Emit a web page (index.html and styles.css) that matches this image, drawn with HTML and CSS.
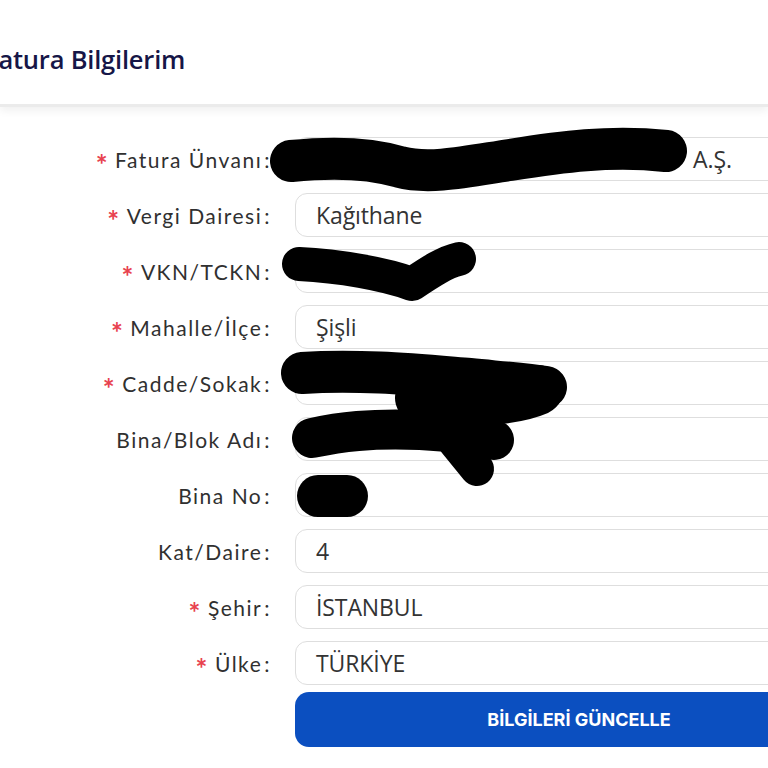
FILE: index.html
```html
<!DOCTYPE html>
<html lang="tr">
<head>
<meta charset="utf-8">
<title>Fatura Bilgilerim</title>
<link rel="stylesheet" href="styles.css">
</head>
<body>
<div class="page">
  <header class="header">
    <h1 class="title">Fatura Bilgilerim</h1>
  </header>
  <form class="form">
    <label class="label req">Fatura Ünvanı</label>
    <div class="field field-end">A.Ş.</div>

    <label class="label req">Vergi Dairesi</label>
    <div class="field">Kağıthane</div>

    <label class="label req">VKN/TCKN</label>
    <div class="field"></div>

    <label class="label req">Mahalle/İlçe</label>
    <div class="field">Şişli</div>

    <label class="label req">Cadde/Sokak</label>
    <div class="field"></div>

    <label class="label">Bina/Blok Adı</label>
    <div class="field"></div>

    <label class="label">Bina No</label>
    <div class="field"></div>

    <label class="label">Kat/Daire</label>
    <div class="field">4</div>

    <label class="label req">Şehir</label>
    <div class="field">İSTANBUL</div>

    <label class="label req">Ülke</label>
    <div class="field">TÜRKİYE</div>

    <button type="button" class="submit">BİLGİLERİ GÜNCELLE</button>
  </form>
  <svg class="redact" width="768" height="768" viewBox="0 0 768 768" aria-hidden="true">
    <g fill="none" stroke="#000" stroke-linecap="round" stroke-linejoin="round">
      <path stroke-width="42" d="M291,161 C330,157 370,158 400,167 C430,175 470,166 510,160 C560,152 610,145 666,151"/>
      <path stroke-width="34" d="M299,264 C340,266 385,274 412,284 C430,272 445,262 459,259"/>
      <path stroke-width="42" d="M302,373 C360,369 420,375 470,379 C500,382 525,384 546,387"/>
      <path stroke-width="50" d="M420,398 C470,404 515,400 538,390"/>
      <path stroke-width="40" d="M312,438 C340,432 370,428 420,430 C460,432 480,436 494,440"/>
      <path stroke-width="34" d="M455,442 L477,469"/>
      <path stroke-width="42" d="M318,496 L347,496"/>
    </g>
  </svg>
</div>
</body>
</html>
```

FILE: styles.css
```css
html, body {
  margin: 0;
  padding: 0;
  background: #ffffff;
}

body {
  overflow: hidden;
  width: 768px;
  height: 768px;
}

.page {
  position: relative;
  width: 768px;
  height: 768px;
  overflow: hidden;
}

.header {
  height: 104px;
  background: #ffffff;
  box-shadow: 0 3px 0 #ebebeb, 0 7px 8px rgba(0, 0, 0, 0.06);
  display: flex;
  align-items: flex-start;
}

.title {
  margin: 42px 0 0 -15px;
  font-family: "Open Sans", "Noto Sans", sans-serif;
  font-weight: 600;
  font-size: 25.5px;
  line-height: 34px;
  letter-spacing: -0.2px;
  color: #161647;
}

.form {
  display: grid;
  grid-template-columns: 271px 568px;
  grid-auto-rows: 44px;
  column-gap: 24px;
  row-gap: 12px;
  padding-top: 33px;
}

.label {
  display: flex;
  align-items: center;
  justify-content: flex-end;
  font-family: "Lato", "Noto Sans", sans-serif;
  font-size: 21px;
  color: #303030;
  letter-spacing: 1.5px;
  white-space: nowrap;
}

.label::after {
  content: ":";
  margin-left: 2px;
}

.req::before {
  content: "*";
  color: #e8424f;
  font-size: 28px;
  font-weight: 700;
  margin-right: 6px;
  position: relative;
  top: 5px;
}

.field {
  box-sizing: border-box;
  height: 44px;
  border: 1px solid #dedede;
  border-radius: 12px;
  background: #ffffff;
  padding: 0 20px;
  display: flex;
  align-items: center;
  font-family: "Open Sans", "Noto Sans", sans-serif;
  font-size: 23px;
  color: #333333;
  letter-spacing: -0.1px;
}

.field-end {
  padding-left: 397px;
}

.submit {
  grid-column: 2;
  height: 55px;
  margin-top: -5px;
  border: none;
  border-radius: 14px;
  background: #0b4fc0;
  color: #ffffff;
  font-family: "Inter", "Roboto", sans-serif;
  font-weight: 700;
  font-size: 18px;
  letter-spacing: 0;
  cursor: pointer;
}

.redact {
  position: absolute;
  left: 0;
  top: 0;
  pointer-events: none;
}
```
